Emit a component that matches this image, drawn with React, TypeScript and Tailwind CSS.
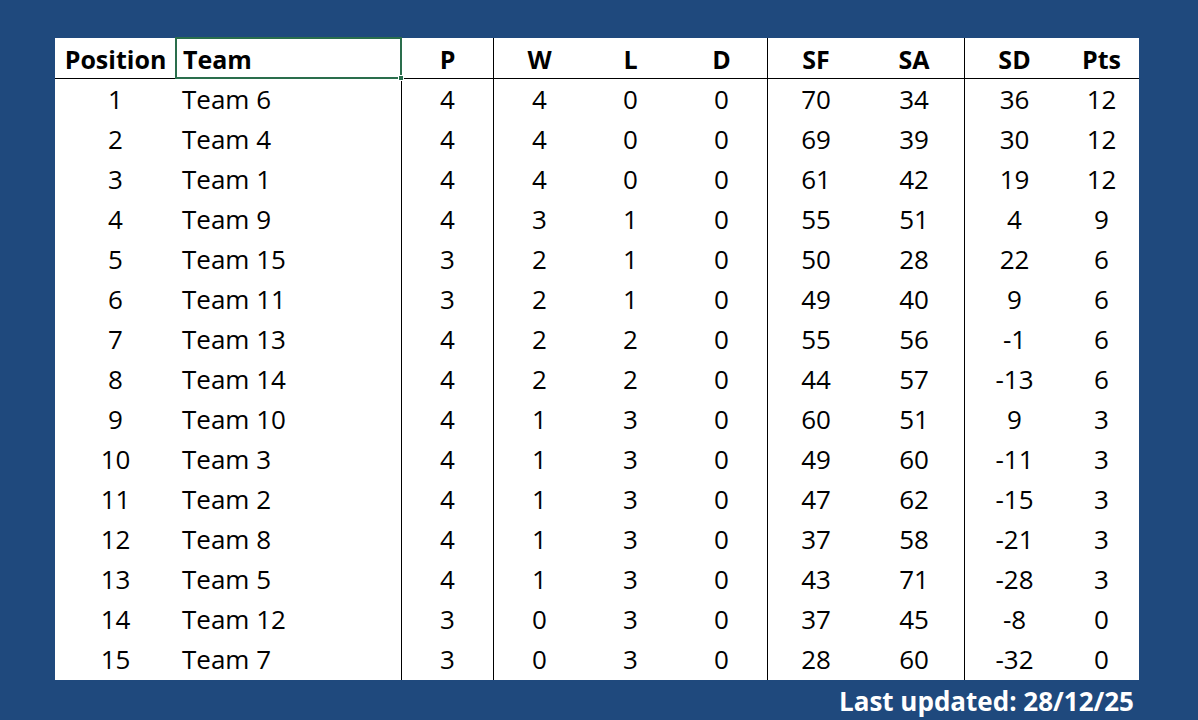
import React from "react";

const rows: [number, string, number, number, number, number, number, number, number, number][] = [
  [1, "Team 6", 4, 4, 0, 0, 70, 34, 36, 12],
  [2, "Team 4", 4, 4, 0, 0, 69, 39, 30, 12],
  [3, "Team 1", 4, 4, 0, 0, 61, 42, 19, 12],
  [4, "Team 9", 4, 3, 1, 0, 55, 51, 4, 9],
  [5, "Team 15", 3, 2, 1, 0, 50, 28, 22, 6],
  [6, "Team 11", 3, 2, 1, 0, 49, 40, 9, 6],
  [7, "Team 13", 4, 2, 2, 0, 55, 56, -1, 6],
  [8, "Team 14", 4, 2, 2, 0, 44, 57, -13, 6],
  [9, "Team 10", 4, 1, 3, 0, 60, 51, 9, 3],
  [10, "Team 3", 4, 1, 3, 0, 49, 60, -11, 3],
  [11, "Team 2", 4, 1, 3, 0, 47, 62, -15, 3],
  [12, "Team 8", 4, 1, 3, 0, 37, 58, -21, 3],
  [13, "Team 5", 4, 1, 3, 0, 43, 71, -28, 3],
  [14, "Team 12", 3, 0, 3, 0, 37, 45, -8, 0],
  [15, "Team 7", 3, 0, 3, 0, 28, 60, -32, 0],
];

const headers = ["Position", "Team", "P", "W", "L", "D", "SF", "SA", "SD", "Pts"];
const lined = [2, 3, 6, 8];

export default function App() {
  return (
    <div
      className="w-[1198px] h-[720px] bg-[#1f497d] pt-[38px] pl-[55px] overflow-hidden"
      style={{ fontFamily: '"Open Sans", "Liberation Sans", sans-serif' }}
    >
      <div className="w-[1084px] bg-white relative">
        <div className="grid grid-cols-[121px_225px_92px_92px_91px_91px_97px_100px_100px_75px] text-black">
          {headers.map((h, i) => (
            <div
              key={h}
              className={`h-[41px] pt-[3px] border-b border-black flex items-center font-bold text-[25px] ${
                i === 1 ? "justify-start pl-[7px]" : "justify-center"
              } ${lined.includes(i) ? "border-l" : ""}`}
            >
              {h}
            </div>
          ))}
          {rows.map((r) =>
            r.map((v, i) => (
              <div
                key={`${r[0]}-${i}`}
                className={`${r[0] === 15 ? "h-[41px]" : "h-[40px]"} flex items-center text-[26px] border-black ${
                  i === 1 ? "justify-start pl-[6px]" : "justify-center"
                } ${lined.includes(i) ? "border-l" : ""}`}
              >
                {v}
              </div>
            ))
          )}
        </div>
        <div className="absolute left-[120px] top-[-1px] w-[227px] h-[42px] border-2 border-[#2a6e4c] pointer-events-none">
          <div className="absolute right-[-4px] bottom-[-4px] w-[6px] h-[6px] bg-[#2a6e4c] border border-white" />
        </div>
      </div>
      <div className="w-[1079px] text-right text-white font-bold text-[26px] leading-none pt-[8px]">
        Last updated: 28/12/25
      </div>
    </div>
  );
}
